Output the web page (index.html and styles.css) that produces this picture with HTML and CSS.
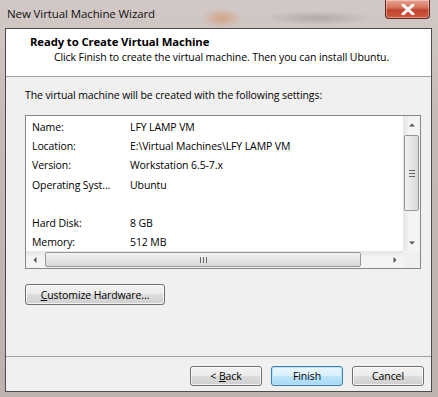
FILE: index.html
```html
<!DOCTYPE html>
<html lang="en">
<head>
    <meta charset="UTF-8">
    <title>New Virtual Machine Wizard</title>
    <link rel="stylesheet" href="styles.css">
</head>
<body>
    <div class="window">
        <div class="titlebar">
            <span class="title">New Virtual Machine Wizard</span>
            <div class="close-btn">
                <svg width="14" height="11" viewBox="0 0 14 11">
                    <path d="M2 1 L12 10 M12 1 L2 10" stroke="#fff" stroke-width="3" stroke-linecap="round"/>
                </svg>
            </div>
        </div>

        <div class="client">
            <div class="header">
                <div class="header-title">Ready to Create Virtual Machine</div>
                <div class="header-sub">Click Finish to create the virtual machine. Then you can install Ubuntu.</div>
            </div>

            <div class="content">
                <p class="intro">The virtual machine will be created with the following settings:</p>

                <div class="listbox">
                    <div class="list-main">
                        <div class="rows">
                            <div class="row"><span class="key">Name:</span><span>LFY LAMP VM</span></div>
                            <div class="row"><span class="key">Location:</span><span>E:\Virtual Machines\LFY LAMP VM</span></div>
                            <div class="row"><span class="key">Version:</span><span>Workstation 6.5-7.x</span></div>
                            <div class="row"><span class="key">Operating Syst...</span><span>Ubuntu</span></div>
                            <div class="row"></div>
                            <div class="row"><span class="key">Hard Disk:</span><span>8 GB</span></div>
                            <div class="row"><span class="key">Memory:</span><span>512 MB</span></div>
                        </div>
                        <div class="vscroll">
                            <div class="arrow up"></div>
                            <div class="track">
                                <div class="vthumb"><span class="grip-v"></span></div>
                            </div>
                            <div class="arrow down"></div>
                        </div>
                    </div>
                    <div class="hscroll-row">
                        <div class="hscroll">
                            <div class="arrow left"></div>
                            <div class="htrack">
                                <div class="hthumb"><span class="grip-h"></span></div>
                            </div>
                            <div class="arrow right"></div>
                        </div>
                        <div class="corner"></div>
                    </div>
                </div>

                <button class="btn btn-wide"><u>C</u>ustomize Hardware...</button>
            </div>

            <div class="footer">
                <button class="btn">&lt; <u>B</u>ack</button>
                <button class="btn btn-default">Finish</button>
                <button class="btn">Cancel</button>
            </div>
        </div>
    </div>
</body>
</html>
```

FILE: styles.css
```css
body {
    margin: 0;
    font-family: 'Open Sans', 'Noto Sans', sans-serif;
    font-size: 10.5px;
    letter-spacing: -0.1px;
    color: #000;
    background: #c8bcb8;
}

.window {
    width: 438px;
    height: 397px;
    display: flex;
    flex-direction: column;
    background:
        radial-gradient(ellipse 20px 10px at 222px 18px, rgba(214,120,60,0.45), transparent),
        radial-gradient(ellipse 55px 7px at 318px 18px, rgba(90,80,80,0.25), transparent),
        linear-gradient(180deg, #d2c9c6 0%, #c6bab6 30%, #bfb1ad 100%);
}

.titlebar {
    height: 28px;
    display: flex;
    align-items: flex-start;
    padding-left: 7px;
    padding-right: 8px;
}

.title {
    font-size: 11.5px;
    margin-top: 6px;
    color: #111;
}

.close-btn {
    margin-left: auto;
    width: 43px;
    height: 18px;
    display: flex;
    align-items: center;
    justify-content: center;
    border: 1px solid #5c2a22;
    border-top: none;
    border-radius: 0 0 4px 4px;
    background: linear-gradient(180deg, #e8a493 0%, #d4705a 45%, #c0432c 55%, #cf5b3d 100%);
    box-shadow: inset 0 0 0 1px rgba(255,255,255,0.35);
}

.client {
    flex: 1;
    margin: 0 6px 5px 5px;
    border: 1px solid #4f4b4a;
    background: #f0f0f0;
    display: flex;
    flex-direction: column;
}

.header {
    height: 48px;
    background: #fff;
    border-bottom: 1px solid #a0a0a0;
    box-sizing: border-box;
    padding: 5px 0 0 24px;
}

.header-title {
    font-weight: bold;
    font-size: 11.3px;
}

.header-sub {
    margin: 1px 0 0 24px;
}

.content {
    flex: 1;
    padding: 11px 0 0 19px;
}

.intro {
    margin: 0 0 12px;
    line-height: 15px;
}

.listbox {
    width: 396px;
    height: 154px;
    box-sizing: border-box;
    border: 1px solid #828790;
    background: #fff;
    display: flex;
    flex-direction: column;
}

.list-main {
    flex: 1;
    display: flex;
    min-height: 0;
}

.rows {
    flex: 1;
    padding: 2px 0 0 6px;
    overflow: hidden;
}

.row {
    height: 19.2px;
    line-height: 19px;
    display: flex;
    white-space: nowrap;
}

.key {
    width: 98px;
}

.vscroll {
    width: 17px;
    display: flex;
    flex-direction: column;
    background: linear-gradient(90deg, #e4e4e4, #f4f4f4 40%, #f4f4f4);
}

.arrow {
    width: 17px;
    height: 17px;
    position: relative;
    flex: none;
}

.arrow::after {
    content: "";
    position: absolute;
    left: 50%;
    top: 50%;
    border: 3px solid transparent;
    transform: translate(-50%, -50%);
}

.arrow.up::after {
    border-bottom: 3px solid #555;
    border-top-width: 0;
}

.arrow.down::after {
    border-top: 3px solid #555;
    border-bottom-width: 0;
}

.arrow.left::after {
    border-right: 3px solid #555;
    border-left-width: 0;
}

.arrow.right::after {
    border-left: 3px solid #555;
    border-right-width: 0;
}

.track {
    flex: 1;
    padding-top: 2px;
}

.vthumb {
    height: 76px;
    margin: 0 1px;
    box-sizing: border-box;
    border: 1px solid #979797;
    border-radius: 2px;
    background: linear-gradient(90deg, #f2f2f2, #e6e6e6 50%, #d8d8d8);
    display: flex;
    align-items: center;
    justify-content: center;
}

.grip-v {
    width: 6px;
    height: 5px;
    border-top: 1px solid #666;
    border-bottom: 1px solid #666;
    background: linear-gradient(#666, #666) center / 100% 1px no-repeat;
}

.hscroll-row {
    height: 17px;
    display: flex;
}

.hscroll {
    flex: 1;
    display: flex;
    background: linear-gradient(180deg, #e4e4e4, #f4f4f4 40%, #f4f4f4);
}

.htrack {
    flex: 1;
    padding-left: 2px;
    padding-right: 25px;
}

.hthumb {
    height: 15px;
    margin-top: 1px;
    box-sizing: border-box;
    border: 1px solid #979797;
    border-radius: 2px;
    background: linear-gradient(180deg, #f2f2f2, #e6e6e6 50%, #d8d8d8);
    display: flex;
    align-items: center;
    justify-content: center;
}

.grip-h {
    width: 5px;
    height: 6px;
    border-left: 1px solid #666;
    border-right: 1px solid #666;
    background: linear-gradient(#666, #666) center / 1px 100% no-repeat;
}

.corner {
    width: 17px;
    background: #f0f0f0;
}

.btn {
    font-family: 'Open Sans', 'Noto Sans', sans-serif;
    font-size: 10.5px;
    letter-spacing: -0.1px;
    height: 20px;
    width: 72px;
    padding: 0;
    border: 1px solid #707070;
    border-radius: 3px;
    color: #000;
    background: linear-gradient(180deg, #f2f2f2 0%, #ebebeb 49%, #dddddd 50%, #cfcfcf 100%);
    box-shadow: inset 0 0 0 1px rgba(255,255,255,0.7);
}

.btn u {
    text-decoration-thickness: 1px;
}

.btn-wide {
    width: 140px;
    height: 21px;
    margin-top: 15px;
}

.btn-default {
    border-color: #3c7fb1;
    background: linear-gradient(180deg, #eaf6fd 0%, #d9f0fc 49%, #bee6fd 50%, #a7d9f5 100%);
    box-shadow: inset 0 0 0 1px #b5e2f9;
}

.footer {
    height: 35px;
    box-sizing: border-box;
    border-top: 1px solid #a0a0a0;
    display: flex;
    justify-content: flex-end;
    gap: 9px;
    padding: 9px 7px 0 0;
}
```
